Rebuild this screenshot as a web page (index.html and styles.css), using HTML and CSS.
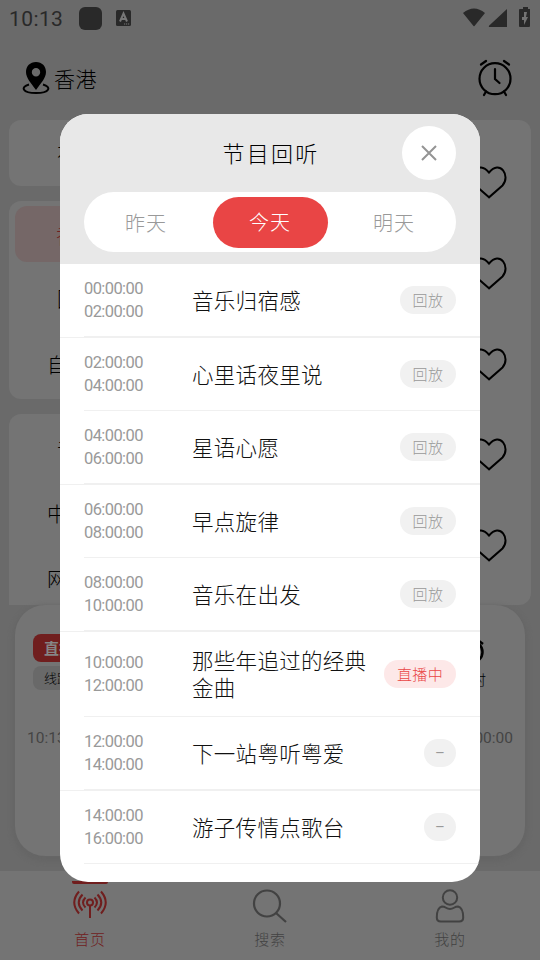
FILE: index.html
```html
<!DOCTYPE html>
<html lang="zh-CN">
<head>
<meta charset="utf-8">
<title>节目回听</title>
<link rel="stylesheet" href="styles.css">
</head>
<body>
<div class="app">
  <header class="status">
    <span class="clock">10:13</span>
    <span class="square"></span>
    <svg class="lang" width="15" height="16" viewBox="0 0 15 16"><rect width="15" height="16" rx="1.5" fill="#292929"/><path d="M4 11.500 7.500 3.500 11 11.500M5.400 9h4.200" fill="none" stroke="#777" stroke-width="2"/><path d="M8 14h1.200m.8 0h1.200m.8 0h1.200" stroke="#777"/></svg>
    <svg class="signals" width="69" height="22" viewBox="0 0 69 22"><path d="M0 6Q11-3 22 6L11.500 19q-.5.6-1 0zM26 18.700 44 2v17.500q0 .5-.5.500h-17q-1 0-.5-1.300z" fill="#292929"/><path d="M57 2h3V0h5v2h2v17q0 1-1 1h-9q-1 0-1-1V3q0-1 1-1z" fill="#292929"/><path d="M61 5v5h-2v3h2v5l4-8h-2l1-5z" fill="#737373"/></svg>
  </header>
  <div class="topbar">
    <svg width="28" height="34" viewBox="0 0 28 34"><path fill-rule="evenodd" d="M14 1C8 1 4 5.300 4 11c0 6 5 11 10 18 5-7 10-12 10-18 0-5.700-4-10-10-10zm0 6a4.200 4.200 0 1 1 0 8.400A4.200 4.200 0 0 1 14 7z"/><path d="M7 23.500C-2 26 .5 32 14 32s16-6 7-8.500" fill="none" stroke="#000" stroke-width="2"/></svg>
    <span class="city">香港</span>
    <svg class="alarm" width="36" height="38" viewBox="0 0 36 38" fill="none" stroke="#000" stroke-width="2.200" stroke-linecap="round"><circle cx="18" cy="19.700" r="15.500"/><path d="M18 10v10l4.500 4M4 5.500 9 2m18 0 5 3.500M9 32.500l-2 3.500M27 32.500l2 3.500" /></svg>
  </div>
  <main class="content">
    <aside class="side">
      <div class="group single"><span>本</span></div>
      <div class="group middle"><span class="chosen">香</span><span>国</span><span class="wide">自</span></div>
      <div class="group last"><span>音</span><span class="wide">中</span><span class="wide">网</span></div>
    </aside>
    <section class="stations">
      <svg class="heart" viewBox="0 0 36 34"><path d="M18 32.300 4.500 20.500C-4 11 7-6 18 7.500 29-6 40 11 31.500 20.500z"/></svg>
      <svg class="heart" viewBox="0 0 36 34"><path d="M18 32.300 4.500 20.500C-4 11 7-6 18 7.500 29-6 40 11 31.500 20.500z"/></svg>
      <svg class="heart" viewBox="0 0 36 34"><path d="M18 32.300 4.500 20.500C-4 11 7-6 18 7.500 29-6 40 11 31.500 20.500z"/></svg>
      <svg class="heart" viewBox="0 0 36 34"><path d="M18 32.300 4.500 20.500C-4 11 7-6 18 7.500 29-6 40 11 31.500 20.500z"/></svg>
      <svg class="heart" viewBox="0 0 36 34"><path d="M18 32.300 4.500 20.500C-4 11 7-6 18 7.500 29-6 40 11 31.500 20.500z"/></svg>
    </section>
  </main>
  <section class="player">
    <div class="player-top">
      <div class="tags"><span class="live">直播</span><span class="line">线路</span></div>
      <div class="timer"><svg width="28" height="28" viewBox="0 0 28 28" fill="none" stroke="#000" stroke-width="2.500"><circle cx="14" cy="13" r="10.500"/><path d="M4 5l3-3m14 0 4 3"/></svg><span>定时</span></div>
    </div>
    <div class="progress"><span>10:13</span><span>00:00</span></div>
  </section>
  <nav class="tabs">
    <div class="tab active"><i></i><svg width="36" height="36" viewBox="0 0 36 36" fill="none" stroke="#701e1e" stroke-width="2"><circle cx="18" cy="13.500" r="3"/><path d="M18 17v12M13.500 8.500q-5 5 0 10M10.500 5.500q-7.500 8 0 16M7 2.500q-9.500 11 0 22M22.500 8.500q5 5 0 10M25.500 5.500q7.500 8 0 16M29 2.500q9.500 11 0 22"/></svg><span>首页</span></div>
    <div class="tab"><i></i><svg width="36" height="36" viewBox="0 0 36 36" fill="none" stroke="#424242" stroke-width="2.200"><circle cx="15" cy="14.500" r="13"/><path d="m24 24 10 9"/></svg><span>搜索</span></div>
    <div class="tab"><i></i><svg width="36" height="36" viewBox="0 0 36 36" fill="none" stroke="#424242" stroke-width="2"><circle cx="18" cy="8.500" r="7.200"/><path d="M10 17.500c4 0 4 2.500 8 2.500s4-2.500 8-2.500c4 1 5.200 5 5.200 11 0 3-1 4-4 4H8.800c-3 0-4-1-4-4 0-6 1.200-10 5.200-11z"/></svg><span>我的</span></div>
  </nav>
</div>
<div class="modal">
  <div class="modal-head">
    <div class="title-row"><h1>节目回听</h1><button class="close"><svg width="18" height="18" viewBox="0 0 18 18"><path d="m2 2 14 14M16 2 2 16" stroke="#949494" stroke-width="2" fill="none"/></svg></button></div>
    <div class="days"><span>昨天</span><span class="today">今天</span><span>明天</span></div>
  </div>
  <div class="list">
    <div class="row full"><div class="cell"><div class="time">00:00:00<br>02:00:00</div><p>音乐归宿感</p><b>回放</b></div></div>
    <div class="row"><div class="cell"><div class="time">02:00:00<br>04:00:00</div><p>心里话夜里说</p><b>回放</b></div></div>
    <div class="row full"><div class="cell"><div class="time">04:00:00<br>06:00:00</div><p>星语心愿</p><b>回放</b></div></div>
    <div class="row"><div class="cell"><div class="time">06:00:00<br>08:00:00</div><p>早点旋律</p><b>回放</b></div></div>
    <div class="row full"><div class="cell"><div class="time">08:00:00<br>10:00:00</div><p>音乐在出发</p><b>回放</b></div></div>
    <div class="row"><div class="cell tall"><div class="time">10:00:00<br>12:00:00</div><p>那些年追过的经典<br>金曲</p><b class="now">直播中</b></div></div>
    <div class="row full"><div class="cell"><div class="time">12:00:00<br>14:00:00</div><p>下一站粤听粤爱</p><b class="none">–</b></div></div>
    <div class="row"><div class="cell"><div class="time">14:00:00<br>16:00:00</div><p>游子传情点歌台</p><b class="none">–</b></div></div>
  </div>
</div>
</body>
</html>
```
FILE: styles.css
```css
* { box-sizing: border-box; }
body { margin: 0; width: 540px; height: 960px; overflow: hidden; position: relative; font-family: "AR PL UKai CN", KaiTi, "Noto Sans CJK SC", sans-serif; font-weight: 300; }
h1, p { margin: 0; font-weight: 300; }
.app { height: 960px; display: flex; flex-direction: column; background: #6a6a6a; }
.status { height: 36px; display: flex; align-items: center; padding: 0 8px 0 9px; font: 400 21px Roboto, sans-serif; color: #292929; }
.clock { width: 70px; letter-spacing: .4px; padding-top: 2px; }
.square { width: 23px; height: 23px; border-radius: 6px; background: #292929; margin-top: 1px; }
.lang { margin-left: 14px; }
.signals { margin: 0 0 3px auto; position: relative; top: 1px; }
.topbar { height: 84px; display: flex; align-items: center; padding: 0 27px 0 22px; }
.city { font-size: 21px; margin: 0 0 1px 4px; letter-spacing: .5px; }
.alarm { margin-left: auto; }
.content { height: 485px; padding: 0 9px; display: flex; gap: 14px; }
.side { width: 124px; display: flex; flex-direction: column; gap: 15px; }
.group { background: #747474; border-radius: 12px; display: flex; flex-direction: column; font-size: 20px; }
.group span { height: 66px; line-height: 64px; padding-left: 48px; }
.group .wide { padding-left: 38px; }
.middle { height: 198px; }
.middle .chosen { height: 56px; margin: 5px 5px 5px 6px; border-radius: 12px; background: #756767; color: #701e1e; padding-left: 41px; line-height: 60px; }
.last { height: 191px; padding-top: 4px; border-radius: 12px 12px 0 0; }
.last span:last-child { line-height: 66px; }
.stations { flex: 1; background: #747474; border-radius: 12px; padding: 45px 24px 0; display: flex; flex-direction: column; align-items: flex-end; gap: 56.800px; }
.heart { width: 36px; height: 34px; flex: none; fill: none; stroke: #000; stroke-width: 2; }
.player { height: 251px; margin: 0 15px; background: #747474; border-radius: 30px; box-shadow: 0 3px 4px 3px #666; padding: 29px 12px 0; }
.player-top { display: flex; justify-content: space-between; padding: 0 27px 0 6px; }
.tags { display: flex; flex-direction: column; gap: 4px; }
.tags span { width: 50px; border-radius: 8px; padding-left: 11px; white-space: nowrap; }
.live { height: 28px; line-height: 27px; background: #701e1e; color: #858585; font-size: 15px; font-weight: 700; }
.line { height: 24px; line-height: 23px; background: #696969; font-size: 13px; }
.timer { display: flex; flex-direction: column; align-items: center; padding-top: 5px; font-size: 14px; line-height: 24px; }
.progress { display: flex; justify-content: space-between; margin-top: 36px; font: 400 15.500px/22px Roboto, sans-serif; color: #444; }
.tabs { margin-top: 15px; height: 89px; background: #747474; display: grid; grid-template-columns: repeat(3, 1fr); color: #424242; font-size: 15px; letter-spacing: .8px; }
.tab { display: flex; flex-direction: column; align-items: center; padding-top: 10px; }
.tab i { width: 36px; height: 2.500px; border-radius: 0 0 2px 2px; }
.tab svg { margin-top: 5.500px; }
.tab span { line-height: 22px; margin-top: 3px; }
.active { color: #701e1e; }
.active i { background: #701e1e; }
.modal { position: absolute; left: 60px; top: 114px; width: 420px; height: 768px; border-radius: 28px; background: #fff; overflow: hidden; }
.modal-head { height: 150px; background: #e8e8e8; padding: 12px 24px; }
.title-row { height: 54px; display: grid; grid-template-columns: 54px 1fr 54px; align-items: center; }
.title-row h1 { grid-column: 2; text-align: center; font-size: 22px; letter-spacing: 2.200px; padding: 0 0 3px 2px; }
.close { width: 54px; height: 54px; border: 0; border-radius: 50%; background: #fff; display: grid; place-items: center; padding: 0; }
.days { height: 60px; margin-top: 12px; padding: 4px 0; border-radius: 30px; background: #fff; display: grid; grid-template-columns: repeat(3, 1fr); align-items: center; text-align: center; font-size: 20px; letter-spacing: 1px; color: #999; }
.today { width: 115px; height: 51px; line-height: 50px; justify-self: center; border-radius: 26px; background: #e94545; color: #fff; }
.row.full { border-bottom: 1px solid #f0f0f0; }
.cell { height: 73px; margin-left: 24px; padding-right: 24px; border-bottom: 1px solid #f0f0f0; display: flex; align-items: center; }
.cell.tall { height: 85px; }
.time { width: 108px; font: 400 16.500px/23px Roboto, sans-serif; letter-spacing: -.6px; color: #999; }
.cell p { font-size: 21.500px; line-height: 27px; letter-spacing: .3px; color: #111; white-space: nowrap; padding-bottom: 2px; }
.cell b { margin-left: auto; width: 56px; height: 28px; border-radius: 14px; background: #f1f1f1; color: #999; font-size: 15px; font-weight: 300; line-height: 27px; text-align: center; letter-spacing: .4px; }
.cell .now { width: 72px; background: #fde8e8; color: #e94545; }
.cell .none { width: 32px; font-family: Roboto, sans-serif; font-weight: 400; line-height: 29px; }
```
